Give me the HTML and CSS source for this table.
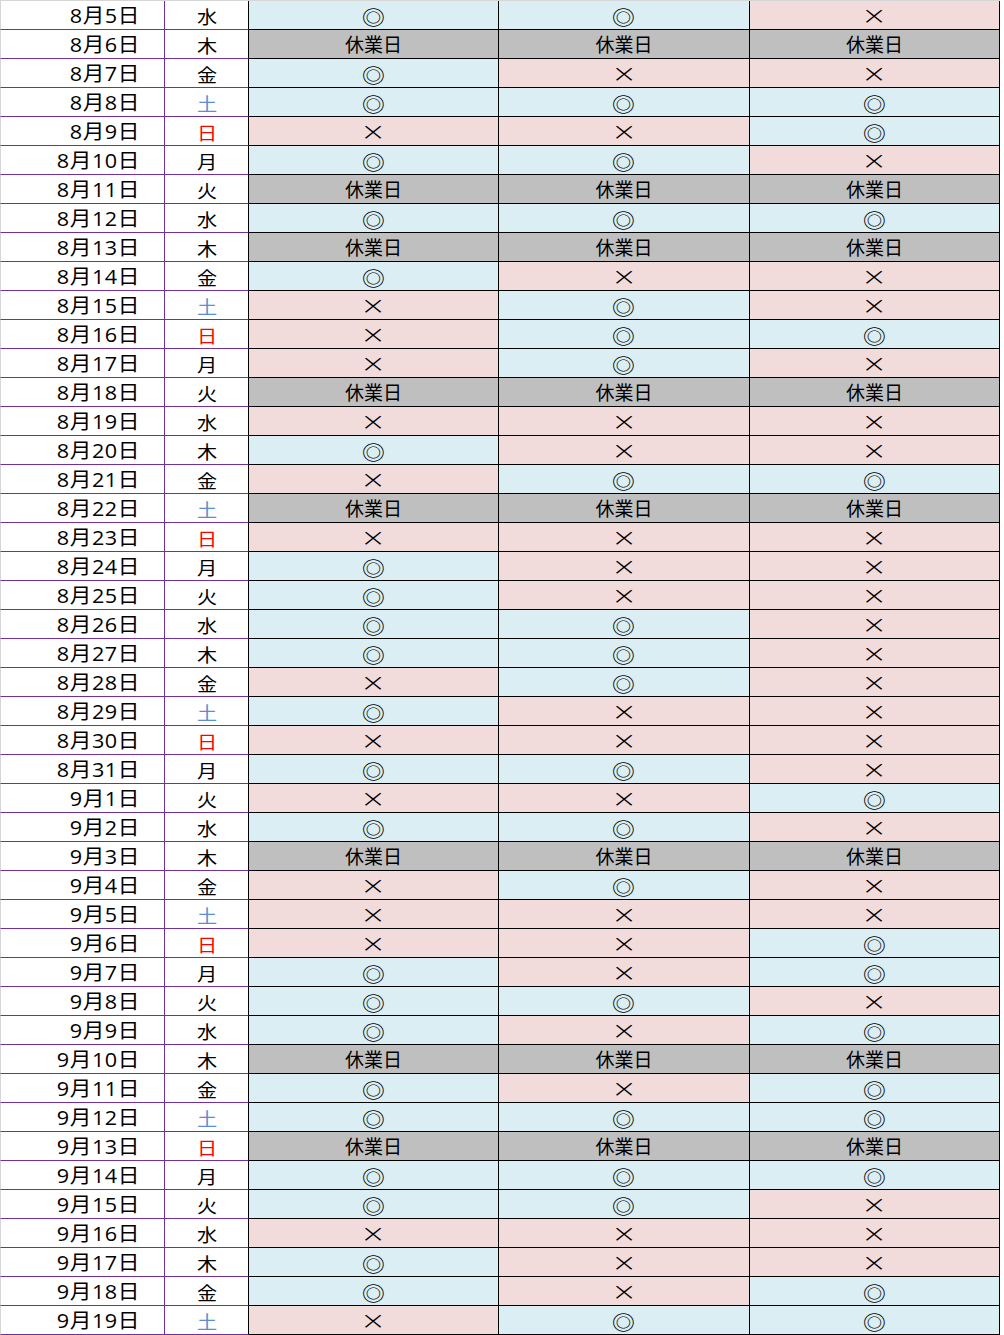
FILE: index.html
```html
<!DOCTYPE html>
<html lang="ja">
<head>
<meta charset="utf-8">
<title>営業カレンダー</title>
<link rel="stylesheet" href="styles.css">
</head>
<body>
<div class="sheet">
<div class="c d"><span>8月5日</span></div><div class="c w"><span>水</span></div><div class="c o"><span>◎</span></div><div class="c o"><span>◎</span></div><div class="c x"><span>×</span></div>
<div class="c d"><span>8月6日</span></div><div class="c w"><span>木</span></div><div class="c h">休業日</div><div class="c h">休業日</div><div class="c h">休業日</div>
<div class="c d"><span>8月7日</span></div><div class="c w"><span>金</span></div><div class="c o"><span>◎</span></div><div class="c x"><span>×</span></div><div class="c x"><span>×</span></div>
<div class="c d"><span>8月8日</span></div><div class="c w sat"><span>土</span></div><div class="c o"><span>◎</span></div><div class="c o"><span>◎</span></div><div class="c o"><span>◎</span></div>
<div class="c d"><span>8月9日</span></div><div class="c w sun"><span>日</span></div><div class="c x"><span>×</span></div><div class="c x"><span>×</span></div><div class="c o"><span>◎</span></div>
<div class="c d"><span>8月10日</span></div><div class="c w"><span>月</span></div><div class="c o"><span>◎</span></div><div class="c o"><span>◎</span></div><div class="c x"><span>×</span></div>
<div class="c d"><span>8月11日</span></div><div class="c w"><span>火</span></div><div class="c h">休業日</div><div class="c h">休業日</div><div class="c h">休業日</div>
<div class="c d"><span>8月12日</span></div><div class="c w"><span>水</span></div><div class="c o"><span>◎</span></div><div class="c o"><span>◎</span></div><div class="c o"><span>◎</span></div>
<div class="c d"><span>8月13日</span></div><div class="c w"><span>木</span></div><div class="c h">休業日</div><div class="c h">休業日</div><div class="c h">休業日</div>
<div class="c d"><span>8月14日</span></div><div class="c w"><span>金</span></div><div class="c o"><span>◎</span></div><div class="c x"><span>×</span></div><div class="c x"><span>×</span></div>
<div class="c d"><span>8月15日</span></div><div class="c w sat"><span>土</span></div><div class="c x"><span>×</span></div><div class="c o"><span>◎</span></div><div class="c x"><span>×</span></div>
<div class="c d"><span>8月16日</span></div><div class="c w sun"><span>日</span></div><div class="c x"><span>×</span></div><div class="c o"><span>◎</span></div><div class="c o"><span>◎</span></div>
<div class="c d"><span>8月17日</span></div><div class="c w"><span>月</span></div><div class="c x"><span>×</span></div><div class="c o"><span>◎</span></div><div class="c x"><span>×</span></div>
<div class="c d"><span>8月18日</span></div><div class="c w"><span>火</span></div><div class="c h">休業日</div><div class="c h">休業日</div><div class="c h">休業日</div>
<div class="c d"><span>8月19日</span></div><div class="c w"><span>水</span></div><div class="c x"><span>×</span></div><div class="c x"><span>×</span></div><div class="c x"><span>×</span></div>
<div class="c d"><span>8月20日</span></div><div class="c w"><span>木</span></div><div class="c o"><span>◎</span></div><div class="c x"><span>×</span></div><div class="c x"><span>×</span></div>
<div class="c d"><span>8月21日</span></div><div class="c w"><span>金</span></div><div class="c x"><span>×</span></div><div class="c o"><span>◎</span></div><div class="c o"><span>◎</span></div>
<div class="c d"><span>8月22日</span></div><div class="c w sat"><span>土</span></div><div class="c h">休業日</div><div class="c h">休業日</div><div class="c h">休業日</div>
<div class="c d"><span>8月23日</span></div><div class="c w sun"><span>日</span></div><div class="c x"><span>×</span></div><div class="c x"><span>×</span></div><div class="c x"><span>×</span></div>
<div class="c d"><span>8月24日</span></div><div class="c w"><span>月</span></div><div class="c o"><span>◎</span></div><div class="c x"><span>×</span></div><div class="c x"><span>×</span></div>
<div class="c d"><span>8月25日</span></div><div class="c w"><span>火</span></div><div class="c o"><span>◎</span></div><div class="c x"><span>×</span></div><div class="c x"><span>×</span></div>
<div class="c d"><span>8月26日</span></div><div class="c w"><span>水</span></div><div class="c o"><span>◎</span></div><div class="c o"><span>◎</span></div><div class="c x"><span>×</span></div>
<div class="c d"><span>8月27日</span></div><div class="c w"><span>木</span></div><div class="c o"><span>◎</span></div><div class="c o"><span>◎</span></div><div class="c x"><span>×</span></div>
<div class="c d"><span>8月28日</span></div><div class="c w"><span>金</span></div><div class="c x"><span>×</span></div><div class="c o"><span>◎</span></div><div class="c x"><span>×</span></div>
<div class="c d"><span>8月29日</span></div><div class="c w sat"><span>土</span></div><div class="c o"><span>◎</span></div><div class="c x"><span>×</span></div><div class="c x"><span>×</span></div>
<div class="c d"><span>8月30日</span></div><div class="c w sun"><span>日</span></div><div class="c x"><span>×</span></div><div class="c x"><span>×</span></div><div class="c x"><span>×</span></div>
<div class="c d"><span>8月31日</span></div><div class="c w"><span>月</span></div><div class="c o"><span>◎</span></div><div class="c o"><span>◎</span></div><div class="c x"><span>×</span></div>
<div class="c d"><span>9月1日</span></div><div class="c w"><span>火</span></div><div class="c x"><span>×</span></div><div class="c x"><span>×</span></div><div class="c o"><span>◎</span></div>
<div class="c d"><span>9月2日</span></div><div class="c w"><span>水</span></div><div class="c o"><span>◎</span></div><div class="c o"><span>◎</span></div><div class="c x"><span>×</span></div>
<div class="c d"><span>9月3日</span></div><div class="c w"><span>木</span></div><div class="c h">休業日</div><div class="c h">休業日</div><div class="c h">休業日</div>
<div class="c d"><span>9月4日</span></div><div class="c w"><span>金</span></div><div class="c x"><span>×</span></div><div class="c o"><span>◎</span></div><div class="c x"><span>×</span></div>
<div class="c d"><span>9月5日</span></div><div class="c w sat"><span>土</span></div><div class="c x"><span>×</span></div><div class="c x"><span>×</span></div><div class="c x"><span>×</span></div>
<div class="c d"><span>9月6日</span></div><div class="c w sun"><span>日</span></div><div class="c x"><span>×</span></div><div class="c x"><span>×</span></div><div class="c o"><span>◎</span></div>
<div class="c d"><span>9月7日</span></div><div class="c w"><span>月</span></div><div class="c o"><span>◎</span></div><div class="c x"><span>×</span></div><div class="c o"><span>◎</span></div>
<div class="c d"><span>9月8日</span></div><div class="c w"><span>火</span></div><div class="c o"><span>◎</span></div><div class="c o"><span>◎</span></div><div class="c x"><span>×</span></div>
<div class="c d"><span>9月9日</span></div><div class="c w"><span>水</span></div><div class="c o"><span>◎</span></div><div class="c x"><span>×</span></div><div class="c o"><span>◎</span></div>
<div class="c d"><span>9月10日</span></div><div class="c w"><span>木</span></div><div class="c h">休業日</div><div class="c h">休業日</div><div class="c h">休業日</div>
<div class="c d"><span>9月11日</span></div><div class="c w"><span>金</span></div><div class="c o"><span>◎</span></div><div class="c x"><span>×</span></div><div class="c o"><span>◎</span></div>
<div class="c d"><span>9月12日</span></div><div class="c w sat"><span>土</span></div><div class="c o"><span>◎</span></div><div class="c o"><span>◎</span></div><div class="c o"><span>◎</span></div>
<div class="c d"><span>9月13日</span></div><div class="c w sun"><span>日</span></div><div class="c h">休業日</div><div class="c h">休業日</div><div class="c h">休業日</div>
<div class="c d"><span>9月14日</span></div><div class="c w"><span>月</span></div><div class="c o"><span>◎</span></div><div class="c o"><span>◎</span></div><div class="c o"><span>◎</span></div>
<div class="c d"><span>9月15日</span></div><div class="c w"><span>火</span></div><div class="c o"><span>◎</span></div><div class="c o"><span>◎</span></div><div class="c x"><span>×</span></div>
<div class="c d"><span>9月16日</span></div><div class="c w"><span>水</span></div><div class="c x"><span>×</span></div><div class="c x"><span>×</span></div><div class="c x"><span>×</span></div>
<div class="c d"><span>9月17日</span></div><div class="c w"><span>木</span></div><div class="c o"><span>◎</span></div><div class="c x"><span>×</span></div><div class="c x"><span>×</span></div>
<div class="c d"><span>9月18日</span></div><div class="c w"><span>金</span></div><div class="c o"><span>◎</span></div><div class="c x"><span>×</span></div><div class="c o"><span>◎</span></div>
<div class="c d"><span>9月19日</span></div><div class="c w sat"><span>土</span></div><div class="c x"><span>×</span></div><div class="c o"><span>◎</span></div><div class="c o"><span>◎</span></div>
</div>
</body>
</html>
```

FILE: styles.css
```css
html, body {
  margin: 0;
  padding: 0;
  background: #ffffff;
}

.sheet {
  display: grid;
  grid-template-columns: 165px 84px 250px 251px 250px;
  grid-auto-rows: 29px;
  width: 1000px;
  border-top: 1px solid #d6d6d6;
  font-family: "DejaVu Sans", "Noto Sans CJK JP", sans-serif;
  color: #000000;
}

.c {
  box-sizing: border-box;
  display: flex;
  align-items: center;
  justify-content: center;
  border-right: 1px solid #000000;
  border-bottom: 1px solid #000000;
  padding-top: 2px;
  font-size: 19px;
  line-height: 1;
}

.c span {
  display: inline-block;
}

.d {
  justify-content: flex-end;
  padding-right: 24px;
  border-left: 1px solid #d6d6d6;
  border-right-color: #7030a0;
  border-bottom-color: #7030a0;
  font-family: "Open Sans", "Noto Sans CJK JP", sans-serif;
  font-size: 20px;
  letter-spacing: 0.5px;
  background: #ffffff;
}

.d span {
  transform: scaleX(1.08);
  transform-origin: right center;
}

.w {
  border-bottom-color: #7030a0;
  background: #ffffff;
  font-family: "Noto Sans CJK JP", sans-serif;
  font-size: 18px;
}

.w span {
  transform: scaleX(1.12);
}

.sat { color: #5b8fd4; }
.sun { color: #ff0000; }

.o {
  background: #daeef3;
  font-family: "Noto Sans CJK JP", sans-serif;
  font-size: 19px;
}

.o span {
  transform: scaleX(1.2);
}

.x {
  background: #f2dcdb;
  font-family: "DejaVu Sans", sans-serif;
  font-weight: 200;
  font-size: 24px;
}

.x span {
  transform: scaleX(1.3);
}

.h {
  background: #bfbfbf;
  font-size: 19px;
}
```
